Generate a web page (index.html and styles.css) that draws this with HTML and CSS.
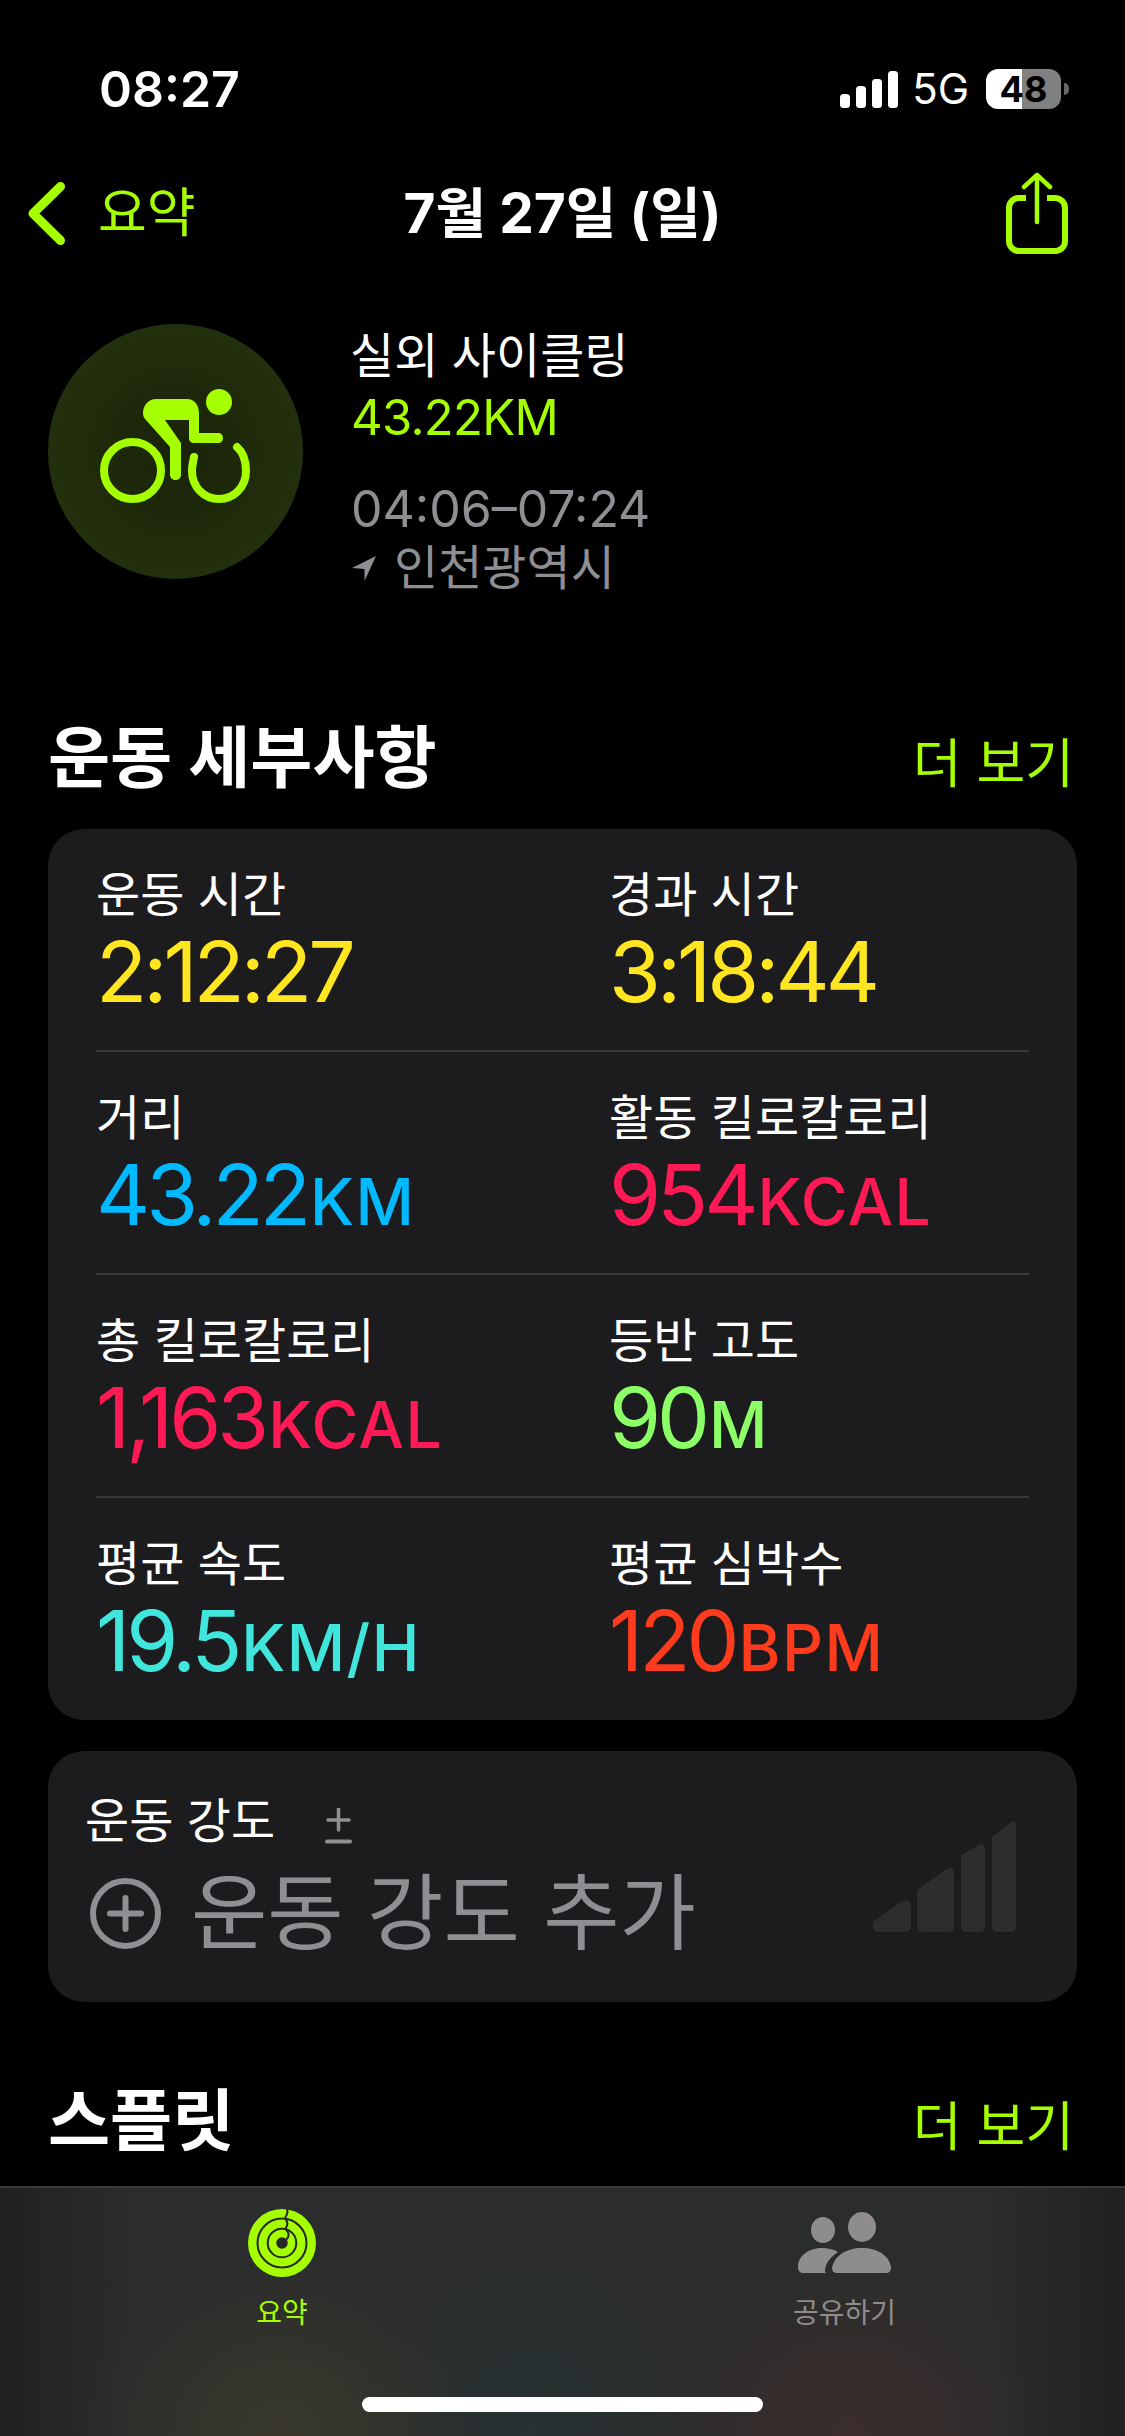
FILE: index.html
```html
<!DOCTYPE html>
<html lang="ko">
<head>
<meta charset="utf-8">
<title>운동 세부사항</title>
<link rel="stylesheet" href="styles.css">
</head>
<body>
<div class="screen">
  <main class="scroll">
    <div class="status">
      <span class="clock">08:27</span>
      <div class="status-right">
        <svg class="signal" viewBox="0 0 58 37" width="58" height="37"><rect x="0" y="23" width="10" height="14" rx="3.5"/><rect x="16" y="15" width="10" height="22" rx="3.5"/><rect x="32" y="8" width="10" height="29" rx="3.5"/><rect x="48" y="0" width="10" height="37" rx="3.5"/></svg>
        <span class="net">5G</span>
        <div class="battery"><span class="battery-num">48</span></div>
        <span class="battery-nub"></span>
      </div>
    </div>

    <nav class="nav">
      <div class="back">
        <svg viewBox="0 0 37 63" width="37" height="63"><path d="M32.5 4.5 5 31.5l27.5 27" fill="none" stroke="#a6ff00" stroke-width="9" stroke-linecap="round" stroke-linejoin="round"/></svg>
        <span>요약</span>
      </div>
      <h1 class="title">7월 27일 (일)</h1>
      <svg class="share" viewBox="0 0 64 82" width="64" height="82"><path d="M22 26H15a10 10 0 0 0-10 10v33a10 10 0 0 0 10 10h36a10 10 0 0 0 10-10V36a10 10 0 0 0-10-10h-8" fill="none" stroke="#a6ff00" stroke-width="6"/><path d="M33 50V3M20 15 33 3l13 12" fill="none" stroke="#a6ff00" stroke-width="4.500" stroke-linecap="round" stroke-linejoin="round"/></svg>
    </nav>

    <section class="workout">
      <div class="badge">
        <svg viewBox="48 324 255 255" width="255" height="255">
          <ellipse cx="219" cy="402" rx="13" ry="13" fill="#a6ff00"/>
          <path d="M143 413C143 405 149 399 156 399H187C194 399 199 405 199 413V433H218C221 433 223 435 223 438S221 443 218 443H194C191 443 189 441 189 438V420H165L181 443V475C181 478 178 480 175.500 480S170 478 170 475V447L146 420C144 418 143 416 143 413Z" fill="#a6ff00"/>
          <circle cx="132.500" cy="470.500" r="28.500" fill="none" stroke="#a6ff00" stroke-width="8"/>
          <path d="M237 447C244 453 246 462 246 471 246 487 234 499 219 499 204 499 192 487 192 471 192 466 193 462 194 457" fill="none" stroke="#a6ff00" stroke-width="8" stroke-linecap="round"/>
        </svg>
      </div>
      <div class="workout-info">
        <div class="w-name">실외 사이클링</div>
        <div class="w-dist">43.22KM</div>
        <div class="w-time">04:06–07:24</div>
        <div class="w-place">
          <svg viewBox="0 0 24 25" width="24" height="25"><path d="M24 0 0 12l12.500 1L12.500 25Z" fill="#8e8e93"/></svg>
          <span>인천광역시</span>
        </div>
      </div>
    </section>

    <div class="sec-head">
      <h2>운동 세부사항</h2>
      <span class="more">더 보기</span>
    </div>

    <section class="card metrics">
      <div class="row">
        <div class="metric"><div class="m-label">운동 시간</div><div class="m-value yellow">2:12:27</div></div>
        <div class="metric"><div class="m-label">경과 시간</div><div class="m-value yellow">3:18:44</div></div>
      </div>
      <div class="row">
        <div class="metric"><div class="m-label">거리</div><div class="m-value blue">43.22<small>KM</small></div></div>
        <div class="metric"><div class="m-label">활동 킬로칼로리</div><div class="m-value pink">954<small>KCAL</small></div></div>
      </div>
      <div class="row">
        <div class="metric"><div class="m-label">총 킬로칼로리</div><div class="m-value pink">1,163<small>KCAL</small></div></div>
        <div class="metric"><div class="m-label">등반 고도</div><div class="m-value green">90<small>M</small></div></div>
      </div>
      <div class="row">
        <div class="metric"><div class="m-label">평균 속도</div><div class="m-value teal">19.5<small>KM/H</small></div></div>
        <div class="metric"><div class="m-label">평균 심박수</div><div class="m-value orange">120<small>BPM</small></div></div>
      </div>
    </section>

    <section class="card effort">
      <div class="effort-main">
        <div class="e-label">운동 강도 <svg viewBox="0 0 27 36" width="27" height="36"><path d="M13.500 1V22M3 12H24" stroke="#8e8e93" stroke-width="3.500" fill="none" stroke-linecap="round"/><path d="M2 33.500H25" stroke="#8e8e93" stroke-width="4" stroke-linecap="round"/></svg></div>
        <div class="e-add">
          <svg viewBox="0 0 71 71" width="71" height="71"><circle cx="35.500" cy="35.500" r="32.500" fill="none" stroke="#8e8e93" stroke-width="6"/><path d="M35.500 20V51M20 35.500H51" stroke="#8e8e93" stroke-width="6" stroke-linecap="round"/></svg>
          <span>운동 강도 추가</span>
        </div>
      </div>
      <svg class="e-bars" viewBox="0 0 144 112" width="144" height="112">
        <path d="M0 102 26 83C32 79 38 80 38 86V107a5 5 0 0 1-5 5H5a5 5 0 0 1-5-5Z" fill="#2d2d2f"/>
        <path d="M44 70 72 50C78 46 81 48 81 54V107a5 5 0 0 1-5 5H49a5 5 0 0 1-5-5Z" fill="#2d2d2f"/>
        <path d="M88 35 106 25C110 23 112 26 112 30V107a5 5 0 0 1-5 5H93a5 5 0 0 1-5-5Z" fill="#2d2d2f"/>
        <path d="M119 17 138 2C141 0 143 2 143 6V107a5 5 0 0 1-5 5H124a5 5 0 0 1-5-5Z" fill="#2d2d2f"/>
      </svg>
    </section>

    <div class="sec-head split">
      <h2>스플릿</h2>
      <span class="more">더 보기</span>
    </div>
  </main>

  <footer class="tabbar">
    <div class="tabs">
      <div class="tab active">
        <svg viewBox="82 28 200 200" width="68" height="68">
          <circle cx="182" cy="128" r="100" fill="#a6ff00"/>
          <circle cx="182" cy="128" r="72" fill="none" stroke="#26282a" stroke-width="6"/>
          <circle cx="182" cy="128" r="42" fill="none" stroke="#26282a" stroke-width="6"/>
          <circle cx="182" cy="128" r="17" fill="#26282a"/>
          <path d="M196 28C204 42 190 48 192 56 200 66 198 78 192 86 202 96 206 108 194 118" fill="none" stroke="#26282a" stroke-width="6"/>
        </svg>
        <span>요약</span>
      </div>
      <div class="tab">
        <svg class="people" viewBox="0 0 93 61" width="93" height="61">
          <ellipse cx="25" cy="18" rx="12" ry="13" fill="#8e8c8c"/>
          <ellipse cx="64" cy="15" rx="14" ry="15" fill="#8e8c8c"/>
          <path d="M0 55C0 43 12 36 24 36 30 36 35 37 40 40 33 45 28 50 27 58 27 59 27 60 28 61H6C2 61 0 59 0 55Z" fill="#8e8c8c"/>
          <path d="M34 56C36 44 48 36 64 36S92 44 93 56C93 59 91 61 88 61H39C36 61 34 59 34 56Z" fill="#8e8c8c"/>
        </svg>
        <span>공유하기</span>
      </div>
    </div>
    <div class="home"></div>
  </footer>
</div>
</body>
</html>
```
FILE: styles.css
```css
* { box-sizing: border-box; }
html, body { margin: 0; padding: 0; background: #000; }
body { font-family: Inter, "Noto Sans CJK KR", sans-serif; color: #fff; }
.screen { width: 1125px; height: 2436px; display: flex; flex-direction: column; overflow: hidden; }
.scroll { height: 2186px; flex: none; overflow: hidden; }

.status { height: 178px; padding: 0 56px 0 99px; display: flex; justify-content: space-between; align-items: center; }
.clock { font-size: 50px; font-weight: 600; line-height: 1; }
.status-right { display: flex; align-items: center; }
.signal { fill: #fff; }
.net { font-size: 42px; font-weight: 400; margin-left: 14px; line-height: 1; }
.battery { width: 75px; height: 40px; margin-left: 17px; border-radius: 12px; background: linear-gradient(90deg, #fff 0 48%, #808080 48% 100%); display: flex; align-items: center; justify-content: center; }
.battery-num { color: #000; font-size: 36px; font-weight: 700; line-height: 1; }
.battery-nub { width: 5px; height: 12px; margin-left: 3px; border-radius: 0 6px 6px 0; background: #666; }

.nav { height: 74px; margin-top: -2px; padding: 0 57px 0 28px; display: flex; align-items: center; position: relative; justify-content: space-between; }
.back { display: flex; align-items: center; gap: 33px; color: #a6ff00; font-size: 53px; line-height: 1; }
.title { position: absolute; left: 0; right: 0; margin: 0; text-align: center; font-size: 55px; font-weight: 700; line-height: 1; }

.workout { margin-top: 74px; padding-left: 48px; display: flex; height: 255px; }
.badge { width: 255px; height: 255px; border-radius: 50%; background: radial-gradient(circle, #192309 0, #27350f 100%); }
.workout-info { margin-left: 47px; }
.w-name { font-size: 48px; line-height: 64px; }
.w-dist { font-size: 49px; line-height: 60px; letter-spacing: -.7px; color: #a6ff00; padding-left: 1px; }
.w-time { font-size: 50px; line-height: 62px; color: #8e8e93; margin-top: 30px; padding-left: 1px; }
.w-place { display: flex; align-items: center; gap: 18px; font-size: 48px; line-height: 56px; color: #8e8e93; padding-left: 2px; }
.w-place svg { flex: none; }

.sec-head { display: flex; justify-content: space-between; align-items: center; padding: 0 51px 0 48px; margin-top: 131px; }
.sec-head h2 { margin: 0; font-size: 67.500px; font-weight: 700; line-height: 96px; }
.more { color: #a6ff00; font-size: 53px; line-height: 84px; margin-top: 12px; }
.sec-head.split { margin-top: 71px; }

.card { margin: 0 48px; background: #1c1c1e; border-radius: 36px; }
.metrics { margin-top: 23px; height: 891px; padding: 0 48px; }
.row { height: 223px; padding-top: 37px; display: grid; grid-template-columns: 513px 1fr; border-bottom: 2px solid #38383a; }
.row:last-child { border-bottom: 0; }
.m-label { font-size: 48px; line-height: 58px; }
.m-value { font-size: 84px; line-height: 84px; font-weight: 400; margin-top: 6px; letter-spacing: -4px; white-space: nowrap; }
.m-value small { font-size: 64px; font-weight: 500; letter-spacing: 1.500px; margin-left: 3px; }
.yellow { color: #ffe620; }
.blue { color: #00b9ff; }
.pink { color: #ff1a55; }
.green { color: #8cff66; }
.teal { color: #40e6dc; }
.orange { color: #ff3b1e; }

.effort { margin-top: 31px; height: 251px; padding: 41px 60px 0 37px; display: flex; justify-content: space-between; align-items: flex-start; }
.e-label { font-size: 48px; line-height: 58px; display: flex; align-items: center; gap: 50px; }
.e-label svg { margin-top: 10px; }
.e-add { display: flex; align-items: center; gap: 30px; color: #8e8e93; font-size: 83px; line-height: 100px; margin-top: 13px; padding-left: 5px; }
.e-bars { margin-top: 28px; }

.tabbar { flex: 1; border-top: 2px solid #38393a; padding-top: 21px; display: flex; flex-direction: column; background: radial-gradient(ellipse 200px 180px at 282px 100%, rgba(80,76,40,.4), transparent), radial-gradient(ellipse 160px 200px at 530px 100%, rgba(30,62,62,.3), transparent), radial-gradient(ellipse 200px 180px at 850px 100%, rgba(84,48,42,.4), transparent), linear-gradient(90deg, #212121 0, #2b2c2d 12%, #2b2c2d 88%, #212121 100%); }
.tabs { display: grid; grid-template-columns: 564px 1fr; height: 188px; }
.tab { display: flex; flex-direction: column; align-items: center; gap: 19px; color: #8e8c8c; font-size: 28px; line-height: 34px; }
.tab.active { color: #a6ff00; }
.people { margin: 3px 0 4px; }
.home { width: 401px; height: 15px; margin: 0 auto; border-radius: 8px; background: #fff; }
```
